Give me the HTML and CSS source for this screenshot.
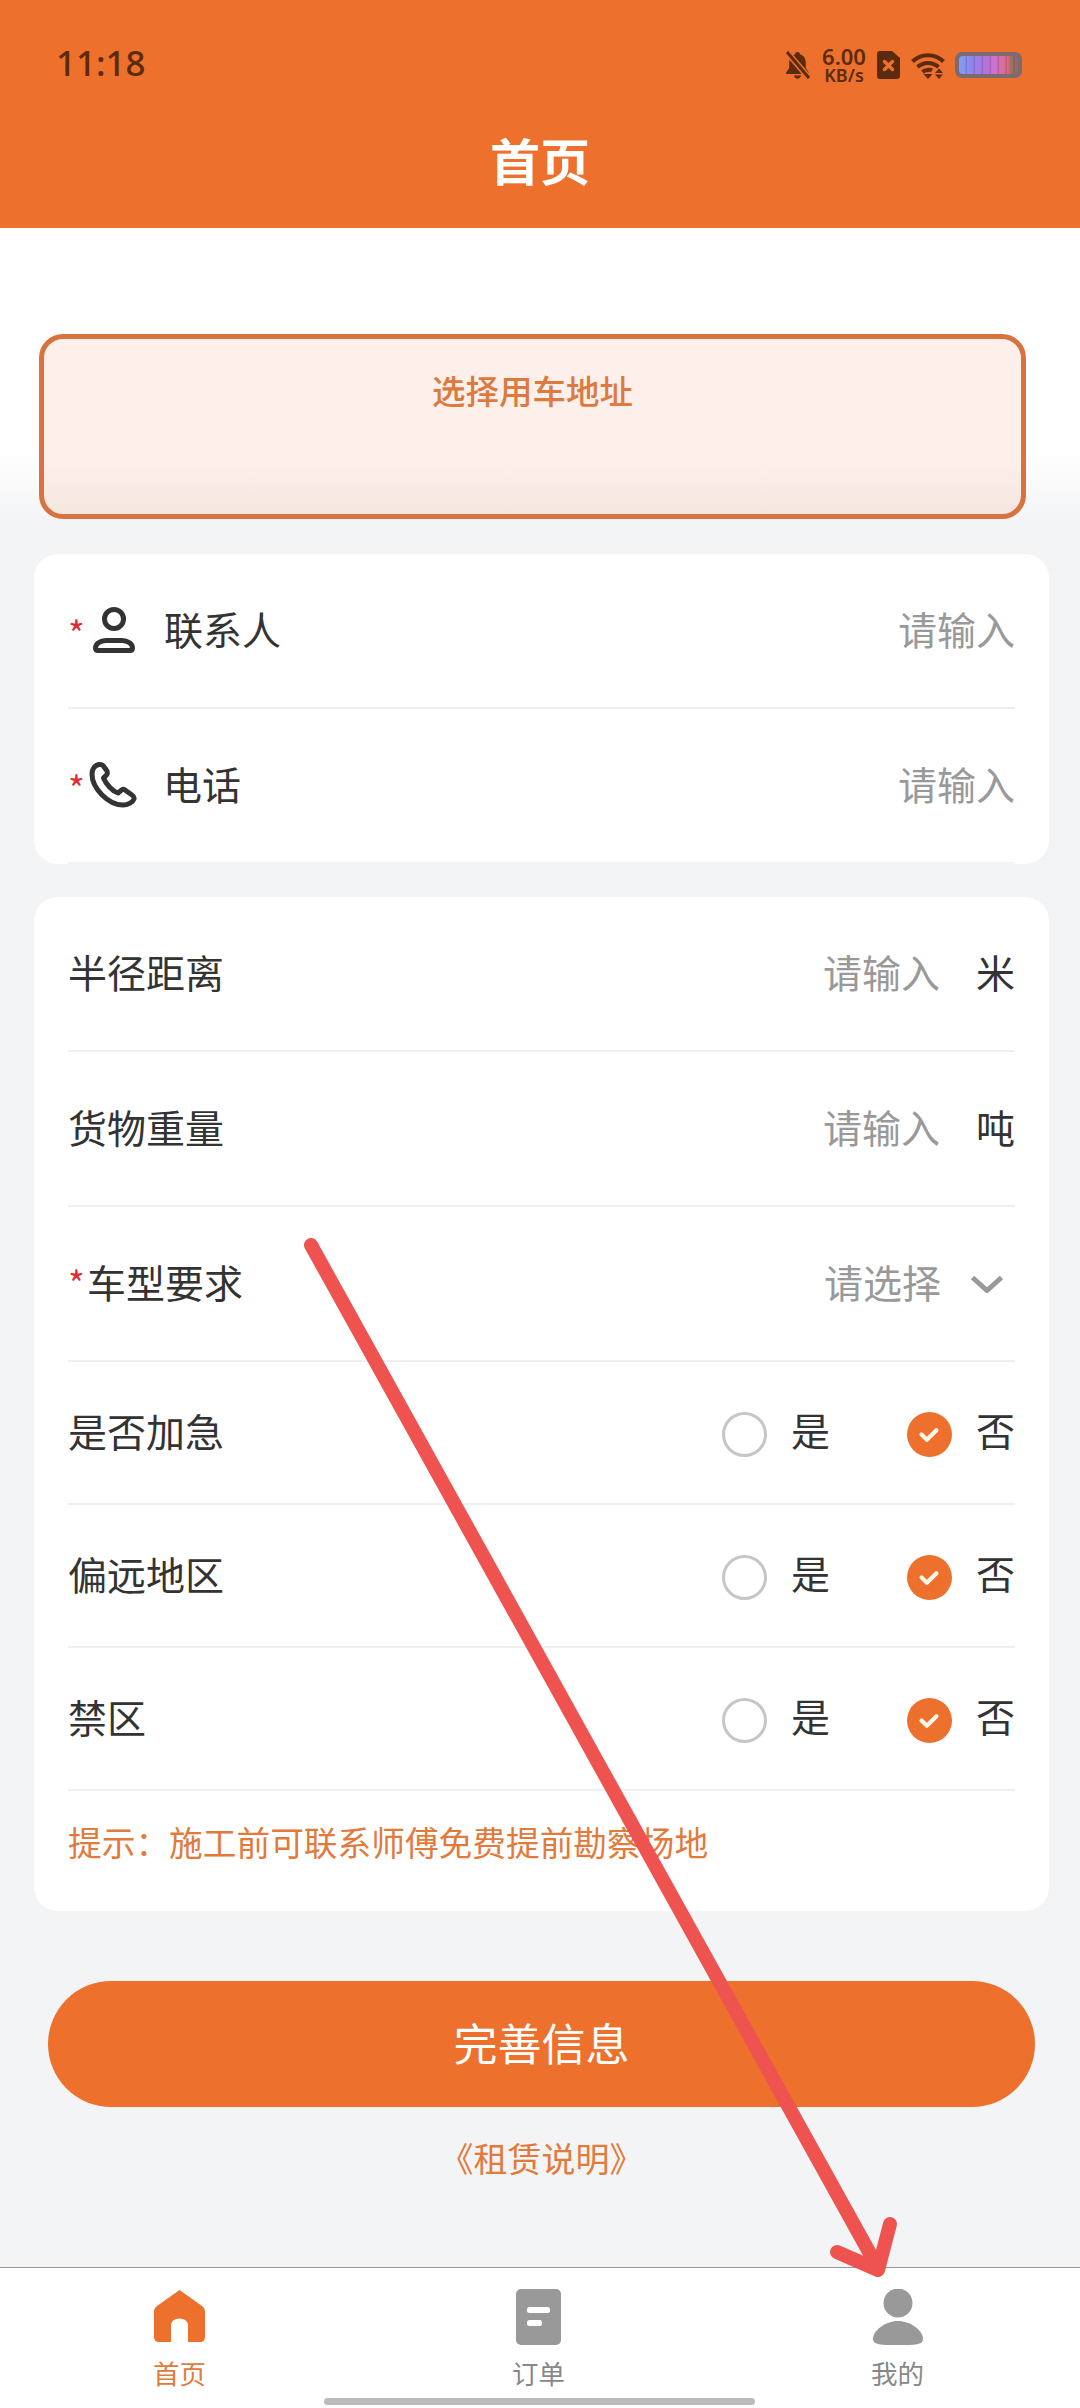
FILE: index.html
```html
<!DOCTYPE html>
<html lang="zh-CN">
<head>
<meta charset="utf-8">
<title>首页</title>
<link rel="stylesheet" href="styles.css">
</head>
<body>
<div class="app">
  <header class="top">
    <div class="status">
      <span class="clock">11:18</span>
      <div class="status-icons">
        <svg class="ic-bell" viewBox="0 0 25 28"><path d="M12.500 1c1.300 0 2.200.9 2.400 2.200 3.800 1 5.900 4.300 5.900 8.300v5.500l3 4.500v1.500H1.200v-1.500l3-4.500v-5.500c0-4 2.100-7.300 5.900-8.300.2-1.300 1.100-2.200 2.400-2.200zM9 24.500h7c-.3 1.800-1.800 3.200-3.500 3.200S9.300 26.300 9 24.500z"/><path class="slash-gap" d="M1 0l23 27"/><path class="slash" d="M2 1l22 26"/></svg>
        <div class="speed"><span class="speed-num">6.00</span><span class="speed-unit">KB/s</span></div>
        <svg class="ic-sim" viewBox="0 0 23 28"><path d="M3 0h12l8 7v18a3 3 0 0 1-3 3H3a3 3 0 0 1-3-3V3a3 3 0 0 1 3-3z"/><path class="sim-x" d="M7.500 10.500l8 8M15.500 10.500l-8 8"/></svg>
        <svg class="ic-wifi" viewBox="0 0 34 27"><path class="arc" d="M1.500 9.500C10 1 24 1 32.500 9.500"/><path class="arc" d="M6.500 15C12.500 9.500 21.500 9.500 27.500 15"/><path class="arc" d="M11.500 20C14.500 17.500 19.500 17.500 21 18.500"/><path d="M12.500 22h9l-4.500 5zM24 21l4-4.500 4 4.500zM24 22.500h8l-4 4.500z"/></svg>
        <div class="battery"><div class="battery-fill"></div></div>
      </div>
    </div>
    <h1 class="title">首页</h1>
  </header>

  <main class="content">
    <div class="address">选择用车地址</div>

    <section class="card contact">
      <div class="row">
        <div class="label"><span class="star">*</span>
          <svg class="ic-person" viewBox="0 0 42 46"><circle cx="21" cy="12" r="9.500"/><path d="M13 33.500H29C35 33.500 39.500 37 39.500 41C39.500 42.500 38.500 43.500 37 43.500H5C3.500 43.500 2.500 42.500 2.500 41C2.500 37 7 33.500 13 33.500Z"/></svg>
          <span class="label-text">联系人</span></div>
        <span class="hint">请输入</span>
      </div>
      <div class="row">
        <div class="label"><span class="star">*</span>
          <svg class="ic-phone" viewBox="0 0 48 47"><path d="M10 3.500C6 4 3 8 3 13C3 27 19 44 34 44C39 44 44 41 45 38C45.500 36 44.500 35 43 34L36 29C34.500 28 33 28.500 32 29.500L29 32C23 30 17 23 14.500 17L17.500 14C18.500 13 18.500 11.500 18 10L14 4.500C13 3.500 11.500 3.300 10 3.500Z"/></svg>
          <span class="label-text">电话</span></div>
        <span class="hint">请输入</span>
      </div>
    </section>

    <section class="card details">
      <div class="row">
        <span class="label">半径距离</span>
        <div class="value"><span class="hint">请输入</span><span class="unit">米</span></div>
      </div>
      <div class="row">
        <span class="label">货物重量</span>
        <div class="value"><span class="hint">请输入</span><span class="unit">吨</span></div>
      </div>
      <div class="row">
        <span class="label"><span class="star star-tight">*</span>车型要求</span>
        <div class="value"><span class="hint">请选择</span>
          <svg class="ic-chevron" viewBox="0 0 34 18"><path d="M2.500 2.500L17 15.500L31.500 2.500"/></svg></div>
      </div>
      <div class="row row-choice">
        <span class="label">是否加急</span>
        <div class="choices">
          <div class="choice"><span class="radio"></span><span class="choice-text">是</span></div>
          <div class="choice"><span class="radio radio-on"><svg viewBox="0 0 20 16"><path d="M3 8l5 5l9-9"/></svg></span><span class="choice-text">否</span></div>
        </div>
      </div>
      <div class="row row-choice">
        <span class="label">偏远地区</span>
        <div class="choices">
          <div class="choice"><span class="radio"></span><span class="choice-text">是</span></div>
          <div class="choice"><span class="radio radio-on"><svg viewBox="0 0 20 16"><path d="M3 8l5 5l9-9"/></svg></span><span class="choice-text">否</span></div>
        </div>
      </div>
      <div class="row row-choice">
        <span class="label">禁区</span>
        <div class="choices">
          <div class="choice"><span class="radio"></span><span class="choice-text">是</span></div>
          <div class="choice"><span class="radio radio-on"><svg viewBox="0 0 20 16"><path d="M3 8l5 5l9-9"/></svg></span><span class="choice-text">否</span></div>
        </div>
      </div>
      <p class="tip">提示：施工前可联系师傅免费提前勘察场地</p>
    </section>

    <button class="submit" type="button">完善信息</button>
    <a class="terms">《租赁说明》</a>
  </main>

  <nav class="tabs">
    <div class="tab tab-on">
      <svg class="tab-icon" viewBox="0 0 51 56"><path d="M25.500 1L48 17Q51 19 51 23V48Q51 53 46 53H34V37Q34 29.500 25.500 29.500Q17 29.500 17 37V53H5Q0 53 0 48V23Q0 19 3 17Z"/></svg>
      <span>首页</span>
    </div>
    <div class="tab">
      <svg class="tab-icon" viewBox="0 0 45 56"><rect width="45" height="56" rx="5"/><rect class="doc-line" x="11" y="18" width="23" height="6" rx="2.500"/><rect class="doc-line" x="11" y="31" width="15" height="6" rx="2.500"/></svg>
      <span>订单</span>
    </div>
    <div class="tab">
      <svg class="tab-icon" viewBox="0 0 50 56"><circle cx="25" cy="14" r="14.500"/><path d="M25 32C38 32 50 42 50 50C50 56 42 56 25 56C8 56 0 56 0 50C0 42 12 32 25 32Z"/></svg>
      <span>我的</span>
    </div>
    <div class="home-bar"></div>
  </nav>

  <!-- hand-drawn red arrow pointing at the 我的 tab -->
  <svg class="annotation" viewBox="0 0 1080 2408">
    <path d="M311 1245L878 2268"/>
    <path d="M837 2252L878 2270L890 2224"/>
  </svg>
</div>
</body>
</html>
```
FILE: styles.css
```css
* { box-sizing: border-box; }

html, body {
  margin: 0;
  padding: 0;
}

body {
  font-family: "Noto Sans CJK SC", "Noto Sans", sans-serif;
  color: #333;
}

.app {
  position: relative;
  width: 1080px;
  height: 2408px;
  display: flex;
  flex-direction: column;
  overflow: hidden;
  background: #f3f4f6;
}

/* Orange header with system status row */
.top {
  height: 228px;
  background: #ed702d;
  flex: none;
  display: flex;
  flex-direction: column;
}

.status {
  height: 121px;
  padding: 42px 58px 0 56px;
  display: flex;
  justify-content: space-between;
  align-items: flex-start;
  color: #5c2a0c;
}

.clock {
  font-family: "Noto Sans", sans-serif;
  font-size: 35px;
  line-height: 42px;
  font-weight: 500;
}

.status-icons {
  display: flex;
  align-items: center;
  margin-top: 4px;
  fill: #5c2a0c;
}

.ic-bell { width: 25px; height: 28px; margin-right: 10px; }
.slash { stroke: #5c2a0c; stroke-width: 3; fill: none; }
.slash-gap { stroke: #ed702d; stroke-width: 6; fill: none; }

.speed {
  width: 48px;
  margin-right: 9px;
  display: flex;
  flex-direction: column;
  align-items: center;
  font-family: "Noto Sans", sans-serif;
  font-weight: 600;
}

.speed-num { font-size: 22px; line-height: 20px; }
.speed-unit { font-size: 18px; line-height: 17px; margin-top: 1px; }

.ic-sim { width: 23px; height: 28px; margin-right: 11px; }
.sim-x { stroke: #ed702d; stroke-width: 3.500; stroke-linecap: round; fill: none; }

.ic-wifi { width: 34px; height: 27px; margin-right: 10px; }
.arc { fill: none; stroke: #5c2a0c; stroke-width: 4; }

.battery {
  width: 67px;
  height: 26px;
  padding: 4px;
  border-radius: 7px;
  background: #7c6a70;
}

/* Charge level: coloured cells with soft dark seams */
.battery-fill {
  height: 100%;
  border-radius: 4px;
  background:
    repeating-linear-gradient(90deg, rgba(90, 60, 110, 0) 0, rgba(90, 60, 110, 0) 6px, rgba(90, 60, 110, .28) 7px, rgba(90, 60, 110, .28) 8px),
    linear-gradient(90deg, #7fa0f0 0%, #8f86f0 22%, #b672dc 45%, #cf72cc 62%, #e0697a 82%, #98705f 90%, #8b6c66 100%);
}

.title {
  margin: 0;
  text-align: center;
  font-size: 50px;
  line-height: 76px;
  font-weight: 700;
  color: #fff;
}

.content {
  flex: 1;
  min-height: 0;
  padding: 106px 0 0 34px;
  display: flex;
  flex-direction: column;
  background: linear-gradient(180deg, #fff 0, #fff 222px, #f3f4f6 296px);
}

.address {
  width: 987px;
  height: 185px;
  margin-left: 5px;
  padding-top: 26px;
  border: 5px solid #d8723f;
  border-radius: 24px;
  background: linear-gradient(180deg, #fdf0ea 0, #fdf0ea 119px, #f2e6df 181px);
  color: #dd7a40;
  font-size: 33.500px;
  line-height: 50px;
  font-weight: 500;
  text-align: center;
}

.card {
  width: 1015px;
  border-radius: 24px;
  background: #fff;
  padding: 0 34px;
}

.contact { margin-top: 35px; height: 310px; }
.details { margin-top: 33px; height: 1014px; }

.row {
  height: 155px;
  padding-bottom: 5px;
  display: flex;
  align-items: center;
  justify-content: space-between;
  border-bottom: 2px solid #eeeff1;
  font-size: 39px;
}

.contact .row:last-child { border-bottom-color: #f3f4f6; }

.row-choice { height: 143px; }

.label {
  display: flex;
  align-items: center;
  line-height: 50px;
  color: #333;
}

.star {
  width: 19px;
  color: #e02b35;
  font-size: 36px;
  line-height: 34px;
  margin-top: 8px;
  flex: none;
}

.star-tight { margin-top: 2px; }

.ic-person {
  width: 42px;
  height: 46px;
  margin: 3px 29px 0 6px;
  fill: none;
  stroke: #333;
  stroke-width: 5;
}

.ic-phone {
  width: 48px;
  height: 47px;
  margin: 3px 26px 0 2px;
  fill: none;
  stroke: #333;
  stroke-width: 5;
  stroke-linejoin: round;
}

.hint { color: #999; }

.value {
  display: flex;
  align-items: center;
}

.unit {
  margin-left: 36px;
  color: #333;
}

.ic-chevron {
  width: 34px;
  height: 18px;
  margin: 5px 11px 0 29px;
  fill: none;
  stroke: #999;
  stroke-width: 5;
}

.choices {
  display: flex;
  align-items: center;
  gap: 77px;
  margin-top: 5px;
}

.choice {
  display: flex;
  align-items: center;
  gap: 24px;
}

.choice-text {
  color: #333;
  line-height: 44px;
  margin-bottom: 8px;
}

.radio {
  width: 45px;
  height: 45px;
  border: 3px solid #c6c6c6;
  border-radius: 50%;
  background: #fff;
  display: flex;
  align-items: center;
  justify-content: center;
  margin-top: 3px;
}

.radio-on {
  border: 0;
  background: #ed702d;
}

.radio-on svg {
  width: 22px;
  height: 17px;
  fill: none;
  stroke: #fff6e8;
  stroke-width: 4;
  stroke-linecap: round;
  stroke-linejoin: round;
}

.tip {
  margin: 0;
  padding-top: 26px;
  font-size: 33.700px;
  line-height: 50px;
  color: #e27a3c;
}

.submit {
  width: 987px;
  height: 126px;
  margin: 70px 0 0 14px;
  padding: 0 0 4px;
  border: 0;
  border-radius: 63px;
  background: #ed702d;
  color: #fff;
  font-family: inherit;
  font-size: 44px;
}

.terms {
  width: 987px;
  margin: 26px 0 0 14px;
  text-align: center;
  font-size: 34px;
  line-height: 50px;
  color: #e27a3c;
}

/* Bottom navigation */
.tabs {
  position: relative;
  flex: none;
  height: 141px;
  display: grid;
  grid-template-columns: repeat(3, 1fr);
  padding: 21px 3px 0 0;
  border-top: 1px solid #999;
  background: #fff;
}

.tab {
  display: flex;
  flex-direction: column;
  align-items: center;
  color: #888;
  font-size: 26.500px;
  line-height: 36px;
  fill: #999;
}

.tab-on {
  color: #e27a3c;
  fill: #ed702d;
}

.tab-icon {
  height: 56px;
  flex: none;
  margin-bottom: 10px;
}

.tab:nth-child(1) .tab-icon { width: 51px; }
.tab:nth-child(2) .tab-icon { width: 45px; }
.tab:nth-child(3) .tab-icon { width: 50px; }

.doc-line { fill: #fff; }

.home-bar {
  position: absolute;
  left: 324px;
  bottom: 3px;
  width: 431px;
  height: 7px;
  border-radius: 4px;
  background: #bbb;
}

.annotation {
  position: absolute;
  inset: 0;
  width: 1080px;
  height: 2408px;
  fill: none;
  stroke: #ef5350;
  stroke-width: 14;
  stroke-linecap: round;
  stroke-linejoin: round;
  pointer-events: none;
}
```
